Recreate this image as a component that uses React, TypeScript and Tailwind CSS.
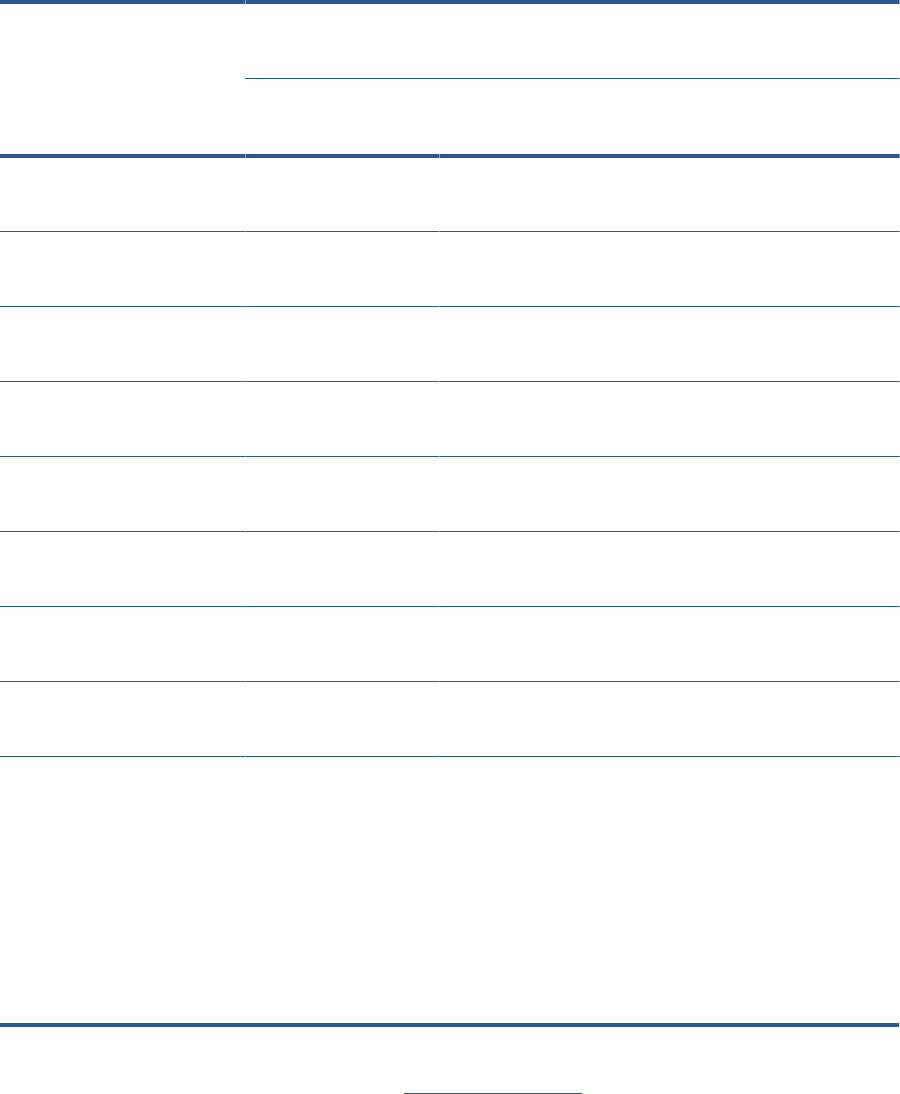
import React from "react";

const B = "bg-[#2b5a90]";

function Marked({ h, marks }: { h: string; marks: boolean }) {
  return (
    <div className={`flex w-[900px] ${h}`}>
      <div className={`w-[245px] ${B}`} />
      <div className={`w-px ${marks ? "bg-[#7f9fc8]" : B}`} />
      <div className={`w-[193px] ${B}`} />
      <div className={`w-px ${marks ? "bg-[#7f9fc8]" : B}`} />
      <div className={`w-[459px] ${B}`} />
      <div className="w-px bg-[#7f9fc8]" />
    </div>
  );
}

function RowLine() {
  return <Marked h="h-px" marks={true} />;
}

function Row({ h }: { h: string }) {
  return <div className={`flex w-[900px] ${h}`}><div className="w-[245px]" /><div className="w-[194px]" /><div className="flex-1" /></div>;
}

export default function App() {
  return (
    <div className="w-[900px] h-[1094px] bg-white overflow-hidden font-['Liberation_Sans',sans-serif]">
      <div className="flex w-[900px] h-[4px]">
        <div className={`w-[245px] ${B}`} />
        <div className="w-px bg-[#7f9fc8]" />
        <div className={`w-[653px] ${B}`} />
        <div className="w-px bg-[#7f9fc8]" />
      </div>
      <Row h="h-[74px]" />
      <div className="flex w-[900px] h-px">
        <div className="w-[245px]" />
        <div className={`w-[654px] ${B}`} />
        <div className="w-px bg-[#7f9fc8]" />
      </div>
      <Row h="h-[75px]" />
      <Marked h="h-[4px]" marks={true} />
      <Row h="h-[73px]" />
      <RowLine />
      <Row h="h-[74px]" />
      <RowLine />
      <Row h="h-[74px]" />
      <RowLine />
      <Row h="h-[74px]" />
      <RowLine />
      <Row h="h-[74px]" />
      <RowLine />
      <Row h="h-[74px]" />
      <RowLine />
      <Row h="h-[74px]" />
      <RowLine />
      <Row h="h-[74px]" />
      <RowLine />
      <Row h="h-[266px]" />
      <div className={`w-[899px] h-[4px] ${B}`} />
      <div className="h-[66px]" />
      <div className={`ml-[404px] w-[178px] h-[2px] ${B}`} />
    </div>
  );
}
